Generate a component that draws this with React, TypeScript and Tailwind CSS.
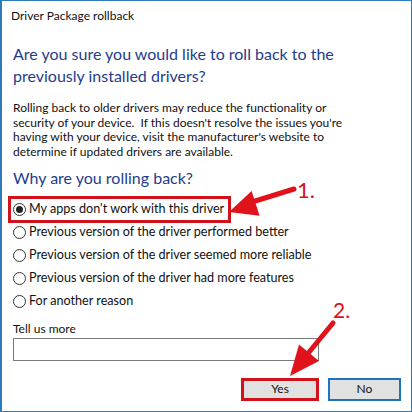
import React from 'react';

const reasons = [
  "My apps don't work with this driver",
  'Previous version of the driver performed better',
  'Previous version of the driver seemed more reliable',
  'Previous version of the driver had more features',
  'For another reason',
];

const Radio = ({ checked }: { checked?: boolean }) => (
  <span className="w-[13px] h-[13px] rounded-full border border-[#333] bg-white flex items-center justify-center shrink-0">
    {checked && <span className="w-[7px] h-[7px] rounded-full bg-[#222]" />}
  </span>
);

export default function App() {
  return (
    <div
      className="relative w-[412px] h-[412px] bg-white border border-[#2f7ab8] border-l-2 text-[#111] overflow-hidden"
      style={{ fontFamily: 'Lato, "Noto Sans", sans-serif' }}
    >
      {/* title */}
      <div className="pt-[6px] pl-[9px] text-[12px] leading-[17px]">Driver Package rollback</div>

      <div className="pl-[11px]">
        <h1 className="mt-[19px] text-[16px] leading-[22px] text-[#1f3d8c]">
          Are you sure you would like to roll back to the
          <br />
          previously installed drivers?
        </h1>

        <p className="mt-[14px] text-[12px] leading-[14.7px]">
          Rolling back to older drivers may reduce the functionality or
          <br />
          security of your device.&nbsp; If this doesn't resolve the issues you're
          <br />
          having with your device, visit the manufacturer's website to
          <br />
          determine if updated drivers are available.
        </p>

        <h2 className="mt-[6px] text-[16px] leading-[24px] text-[#1f3d8c]">Why are you rolling back?</h2>

        <div className="mt-[8px] flex flex-col">
          {reasons.map((r, i) => (
            <label key={i} className="h-[23px] flex items-center gap-[3px] text-[12.6px]">
              <Radio checked={i === 0} />
              <span>{r}</span>
            </label>
          ))}
        </div>

        <div className="mt-[7px] text-[12px] leading-[17px]">Tell us more</div>
        <div className="mt-[1px] w-[306px] h-[23px] border border-[#7a7a7a]" />

        <div className="mt-[17px] flex justify-end gap-[9px] pr-[10px]">
          <div className="w-[78px] h-[23px] border-[3px] border-[#d2121b] flex">
            <button className="flex-1 bg-[#e1e1e1] text-[12px] leading-none">Yes</button>
          </div>
          <button className="w-[73px] h-[23px] bg-[#e1e1e1] border-2 border-[#1e73be] text-[12px] leading-none">No</button>
        </div>
      </div>

      {/* annotations */}
      <div className="absolute left-[6px] top-[195px] w-[223px] h-[27px] border-[3px] border-[#d2121b]" />
      <svg className="absolute left-0 top-0 pointer-events-none" width="412" height="412">
        <line x1="292" y1="188" x2="250" y2="201" stroke="#e0121c" strokeWidth="5" strokeLinecap="round" />
        <polygon points="227,211 249.6,189.9 257.6,214.7" fill="#e0121c" />
        <line x1="331" y1="322" x2="303" y2="356" stroke="#e0121c" strokeWidth="5" strokeLinecap="round" />
        <polygon points="288,375 297,343.4 317,360" fill="#e0121c" />
      </svg>
      <div className="absolute left-[295px] top-[176px] text-[22px] leading-[26px] text-[#d9121c]">1.</div>
      <div className="absolute left-[331px] top-[296px] text-[21px] leading-[26px] text-[#d9121c]">2.</div>
    </div>
  );
}
